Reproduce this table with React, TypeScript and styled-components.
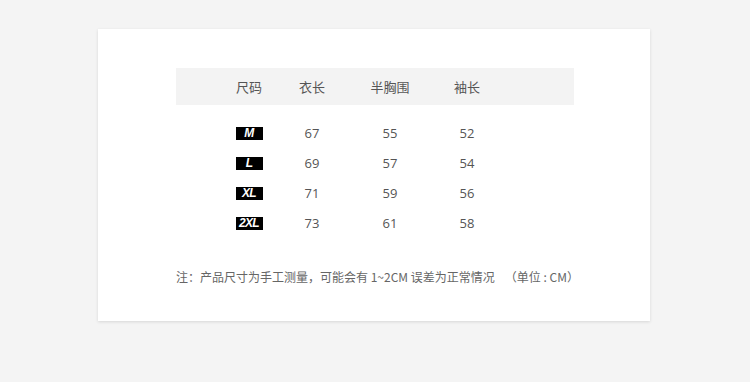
import React from "react";
import styled, { createGlobalStyle } from "styled-components";

const Global = createGlobalStyle`
  html, body { margin: 0; padding: 0; background: #f4f4f4; }
  body { font-family: "Noto Sans", "Noto Sans CJK SC", sans-serif; }
`;

const Page = styled.div`
  width: 750px;
  height: 382px;
  padding: 29px 0 0 98px;
  box-sizing: border-box;
`;

const Card = styled.div`
  width: 552px;
  height: 292px;
  background: #fff;
  box-shadow: 0 1px 3px rgba(0, 0, 0, 0.12);
  padding: 39px 0 0 78px;
  box-sizing: border-box;
`;

const Table = styled.div`
  width: 398px;
`;

const Row = styled.div<{ $head?: boolean }>`
  display: grid;
  grid-template-columns: 62px 64px 92px 62px;
  padding-left: 42px;
  align-items: center;
  height: ${(p) => (p.$head ? "37px" : "30px")};
  background: ${(p) => (p.$head ? "#f3f3f3" : "transparent")};
  margin-bottom: ${(p) => (p.$head ? "13px" : "0")};
`;

const Cell = styled.div`
  text-align: center;
  font-family: "Noto Sans CJK SC", "Noto Sans", sans-serif;
  font-size: 13px;
  color: #555;
  font-weight: 400;
`;

const Num = styled.div`
  text-align: center;
  font-family: "Open Sans", "Noto Sans", sans-serif;
  font-size: 13px;
  color: #555;
`;

const BadgeWrap = styled.div`
  display: flex;
  justify-content: center;
`;

const Badge = styled.span`
  display: inline-flex;
  align-items: center;
  justify-content: center;
  width: 27px;
  height: 13px;
  background: #000;
  color: #fff;
  font-family: "Liberation Sans", Arial, sans-serif;
  font-weight: bold;
  font-style: italic;
  font-size: 12px;
  letter-spacing: -0.6px;
`;

const Note = styled.div`
  margin-top: 30px;
  font-family: "Noto Sans CJK SC", "Noto Sans", sans-serif;
  font-size: 12px;
  color: #666;
  font-weight: 400;
  white-space: nowrap;
`;

const Unit = styled.span`
  margin-left: 10px;
`;

const rows = [
  ["M", "67", "55", "52"],
  ["L", "69", "57", "54"],
  ["XL", "71", "59", "56"],
  ["2XL", "73", "61", "58"],
];

export default function App() {
  return (
    <Page>
      <Global />
      <Card>
        <Table>
          <Row $head>
            <Cell>尺码</Cell>
            <Cell>衣长</Cell>
            <Cell>半胸围</Cell>
            <Cell>袖长</Cell>
          </Row>
          {rows.map((r) => (
            <Row key={r[0]}>
              <BadgeWrap>
                <Badge>{r[0]}</Badge>
              </BadgeWrap>
              <Num>{r[1]}</Num>
              <Num>{r[2]}</Num>
              <Num>{r[3]}</Num>
            </Row>
          ))}
        </Table>
        <Note>
          注：产品尺寸为手工测量，可能会有 1~2CM 误差为正常情况<Unit>（单位 : CM）</Unit>
        </Note>
      </Card>
    </Page>
  );
}
